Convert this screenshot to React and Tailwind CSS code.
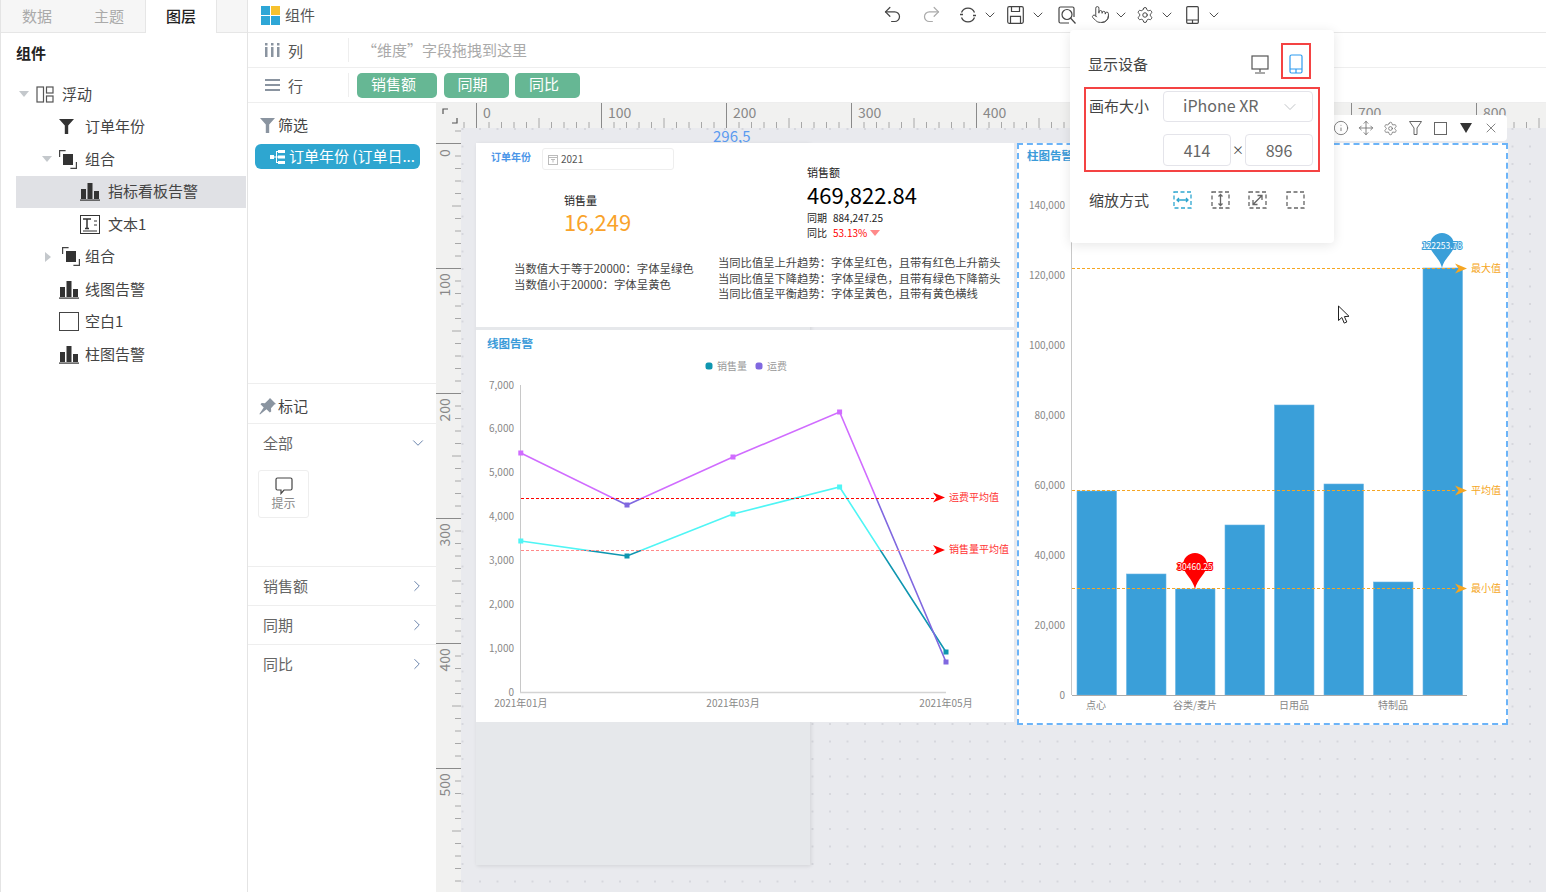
import React from 'react';
import { Undo2, Redo2, Pointer, Settings, ChevronDown, ChevronRight, X, Info, Move } from 'lucide-react';

const BarIcon = ({ className = '' }) => (
  <svg width="20" height="19" viewBox="0 0 20 19" className={className}>
    <rect x="1" y="7" width="5" height="10" fill="#333" />
    <rect x="7.5" y="1" width="5" height="16" fill="#333" />
    <rect x="14" y="9" width="5" height="8" fill="#333" />
    <rect x="0" y="17.5" width="20" height="1.2" fill="#333" />
  </svg>
);

const GroupIcon = () => (
  <svg width="18" height="19" viewBox="0 0 18 19">
    <path d="M0.6 7V0.6h6M17.4 12v6.4h-6" fill="none" stroke="#444" strokeWidth="1.2" />
    <rect x="4" y="4" width="10" height="11" fill="#333" />
  </svg>
);

const FloatIcon = () => (
  <svg width="18" height="17" viewBox="0 0 18 17" fill="none" stroke="#555" strokeWidth="1.2">
    <rect x="1" y="1" width="6.5" height="15" />
    <rect x="10.5" y="1" width="6.5" height="6" />
    <rect x="10.5" y="10" width="6.5" height="6" />
  </svg>
);

const FunnelIcon = ({ color = '#333', width = 15 }) => (
  <svg width={width} height="15" viewBox="0 0 15 15">
    <path d="M0 0h15L9.2 6.5V15H5.8V6.5z" fill={color} />
  </svg>
);

const TextIcon = () => (
  <svg width="20" height="19" viewBox="0 0 20 19" fill="none" stroke="#333">
    <rect x="0.5" y="0.5" width="19" height="18" />
    <path d="M3 4h8M7 4v9M5 13.5h4" strokeWidth="1.5" />
    <path d="M3 16h14M14 6h3M14 10h3" strokeWidth="1" />
  </svg>
);

const Caret = ({ open }) =>
  open ? (
    <svg width="10" height="6" viewBox="0 0 10 6"><path d="M0 0h10L5 6z" fill="#c4c8cc" /></svg>
  ) : (
    <svg width="6" height="10" viewBox="0 0 6 10"><path d="M0 0l6 5-6 5z" fill="#c4c8cc" /></svg>
  );

const TreeRow = ({ pad, icon, label, caret, selected, iconBox = 'w-[26px]' }) => (
  <div className={`flex items-center h-[32.5px] ${pad} ${selected ? 'bg-[#e0e1e5]' : ''}`}>
    <div className="w-[17px] flex items-center">{caret}</div>
    <div className={`${iconBox} flex items-center`}>{icon}</div>
    <span className="text-[15px] leading-[20px] mb-[1px] text-[#444]">{label}</span>
  </div>
);

const Sidebar = () => (
  <div className="w-[248px] shrink-0 h-full border-l border-r border-[#e4e4e4] bg-white">
    <div className="flex h-[33px] bg-[#f6f6f6] border-b border-[#e6e6e6] text-[15px]">
      <div className="w-[72px] flex items-center justify-center text-[#aaa]">数据</div>
      <div className="w-[72px] flex items-center justify-center text-[#aaa]">主题</div>
      <div className="w-[72px] h-[33px] flex items-center justify-center bg-white border-r border-l border-[#e6e6e6] text-[#222] font-medium">图层</div>
    </div>
    <div className="h-[40px] flex items-center pl-[15px] text-[15px] font-bold text-[#222]">组件</div>
    <div className="mt-[5px] ml-[15px] w-[230px]">
      <TreeRow pad="pl-[3px]" caret={<Caret open />} icon={<FloatIcon />} label="浮动" />
      <TreeRow pad="pl-[26px]" icon={<FunnelIcon />} label="订单年份" />
      <TreeRow pad="pl-[26px]" caret={<Caret open />} icon={<GroupIcon />} label="组合" />
      <TreeRow pad="pl-[47px]" iconBox="w-[28px]" icon={<BarIcon />} label="指标看板告警" selected />
      <TreeRow pad="pl-[47px]" iconBox="w-[28px]" icon={<TextIcon />} label="文本1" />
      <TreeRow pad="pl-[29px]" caret={<Caret />} iconBox="w-[23px]" icon={<GroupIcon />} label="组合" />
      <TreeRow pad="pl-[26px]" icon={<BarIcon />} label="线图告警" />
      <TreeRow pad="pl-[26px]" icon={<div className="w-[20px] h-[19px] border border-[#444]" />} label="空白1" />
      <TreeRow pad="pl-[26px]" icon={<BarIcon />} label="柱图告警" />
    </div>
  </div>
);

const Chev = () => <ChevronDown size={16} strokeWidth={1.4} className="text-[#444]" />;

const TopBar = () => (
  <div className="h-[33px] flex items-center pb-[3px] border-b border-[#e8e8e8] bg-white">
    <div className="w-[634px] flex items-center pl-[13px] pt-[2px]">
      <svg width="19" height="19" viewBox="0 0 19 19">
        <rect width="9" height="9" fill="#2ea6d6" />
        <rect x="10" width="9" height="9" fill="#f7c12e" />
        <rect y="10" width="9" height="9" fill="#2ea6d6" />
        <rect x="10" y="10" width="9" height="9" fill="#2ea6d6" />
      </svg>
      <span className="ml-[5px] text-[15px] text-[#555]">组件</span>
    </div>
    <Undo2 size={21} strokeWidth={1.4} className="text-[#444]" />
    <Redo2 size={21} strokeWidth={1.4} className="text-[#aaa] ml-[18px]" />
    <svg width="18" height="18" viewBox="0 0 18 18" fill="none" stroke="#444" strokeWidth="1.3" className="ml-[17px]">
      <path d="M2.5 6.5a7 7 0 0 1 13 0M15.5 11.5a7 7 0 0 1-13 0" />
      <path d="M1 8.5h3M14 9.5h3" />
    </svg>
    <div className="ml-[5px]"><Chev /></div>
    <svg width="17" height="18" viewBox="0 0 17 18" fill="none" stroke="#444" strokeWidth="1.2" className="ml-[9px]">
      <rect x="0.7" y="0.7" width="15.6" height="16.6" rx="1.5" />
      <path d="M4.5 0.7v4.8h8V0.7M3.5 17.3v-7h10v7" />
    </svg>
    <div className="ml-[6px]"><Chev /></div>
    <svg width="18" height="18" viewBox="0 0 18 18" fill="none" stroke="#444" strokeWidth="1.2" className="ml-[12px]">
      <path d="M11 17H2.5A1.5 1.5 0 0 1 1 15.5v-13A1.5 1.5 0 0 1 2.5 1h12A1.5 1.5 0 0 1 16 2.5V11" />
      <circle cx="9" cy="8.5" r="5" />
      <path d="M12.5 12l5 5.5" />
    </svg>
    <Pointer size={19} strokeWidth={1.2} className="text-[#444] ml-[15px]" />
    <div className="ml-[3px]"><Chev /></div>
    <Settings size={18} strokeWidth={1.3} className="text-[#444] ml-[7px]" />
    <div className="ml-[5px]"><Chev /></div>
    <svg width="13" height="18" viewBox="0 0 13 18" fill="none" stroke="#444" strokeWidth="1.2" className="ml-[11px]">
      <rect x="0.7" y="0.7" width="11.6" height="16.6" rx="1" />
      <path d="M0.7 14h11.6M6.5 14v3.3" />
    </svg>
    <div className="ml-[7px]"><Chev /></div>
  </div>
);

const Chip = ({ w, children }) => (
  <div className={`${w} h-[25px] flex items-center pl-[14px] pb-[2px] rounded-[5px] bg-[#66b794] text-white text-[15px]`}>{children}</div>
);

const ShelfRows = () => (
  <>
    <div className="h-[35px] flex items-center border-b border-[#eeeeee] bg-white">
      <div className="w-[101px] h-[24px] flex items-center pl-[17px] border-r border-[#eeeeee]">
        <svg width="15" height="14" viewBox="0 0 15 14">
          <rect x="0" y="0" width="2.5" height="2.5" fill="#8a94a0" />
          <rect x="6" y="0" width="2.5" height="2.5" fill="#8a94a0" />
          <rect x="12" y="0" width="2.5" height="2.5" fill="#8a94a0" />
          <rect x="0" y="4" width="2.5" height="10" fill="#8a94a0" />
          <rect x="6" y="4" width="2.5" height="10" fill="#8a94a0" />
          <rect x="12" y="4" width="2.5" height="10" fill="#8a94a0" />
        </svg>
        <span className="ml-[8px] mt-[2px] text-[15px] text-[#555]">列</span>
      </div>
      <span className="ml-[13px] text-[15px] text-[#aaa]">“维度”字段拖拽到这里</span>
    </div>
    <div className="h-[35px] flex items-center border-b border-[#eeeeee] bg-white">
      <div className="w-[101px] h-[24px] flex items-center pl-[17px] border-r border-[#eeeeee]">
        <svg width="15" height="14" viewBox="0 0 15 14" fill="#8a94a0">
          <rect x="0" y="1" width="15" height="2" />
          <rect x="0" y="6" width="15" height="2" />
          <rect x="0" y="11" width="15" height="2" />
        </svg>
        <span className="ml-[8px] mt-[2px] text-[15px] text-[#555]">行</span>
      </div>
      <div className="ml-[8px] flex gap-[6.5px]">
        <Chip w="w-[80px]">销售额</Chip>
        <Chip w="w-[65px]">同期</Chip>
        <Chip w="w-[65px]">同比</Chip>
      </div>
    </div>
  </>
);

const PropRow = ({ label }) => (
  <div className="h-[39px] flex items-center justify-between pl-[15px] pr-[10px] border-t border-[#eeeeee] text-[15px] text-[#666]">
    <span>{label}</span>
    <ChevronRight size={18} strokeWidth={1.1} className="text-[#4a6a9a]" />
  </div>
);

const MarkPanel = () => (
  <div className="w-[188px] shrink-0 h-full bg-white text-[15px]">
    <div className="h-[280px]">
      <div className="h-[41px] flex items-center pl-[12px] pt-[3px]">
        <FunnelIcon color="#8a94a0" />
        <span className="ml-[3px] text-[#444]">筛选</span>
      </div>
      <div className="ml-[7px] w-[165px] h-[25px] flex items-center pl-[15px] rounded-[6px] bg-[#2ea6d0] text-white whitespace-nowrap">
        <svg width="15" height="14" viewBox="0 0 15 14" fill="#fff" className="shrink-0">
          <rect x="0" y="5" width="4" height="4" />
          <rect x="8" y="0" width="7" height="3" />
          <rect x="8" y="5.5" width="7" height="3" />
          <rect x="8" y="11" width="7" height="3" />
          <path d="M4 6.5h2V1h2v1H7v4.5h1v1H7V12h1v1H6V7.5H4z" />
        </svg>
        <span className="ml-[4px]">订单年份 (订单日...</span>
      </div>
    </div>
    <div className="h-[41px] flex items-center pl-[11px] pt-[6px] border-t border-b border-[#eeeeee]">
      <svg width="17" height="17" viewBox="0 0 17 17" fill="#8a94a0">
        <path d="M11 0l6 6-1.6.6-3.4 3.6.2 3.2-1.4 1.2-3.3-3.4L1 16.5l-.6-.6 4.3-6.3-3.2-3.3L2.7 5l3.2.2L9.5 1.7z" />
      </svg>
      <span className="ml-[2px] text-[#444]">标记</span>
    </div>
    <div className="h-[142px]">
      <div className="h-[38px] flex items-center justify-between pl-[15px] pr-[9px] text-[#666]">
        <span>全部</span>
        <ChevronDown size={18} strokeWidth={1.1} className="text-[#4a6a9a]" />
      </div>
      <div className="ml-[10px] mt-[8px] w-[51px] h-[48px] flex flex-col items-center justify-center border border-[#eeeeee] rounded-[3px]">
        <svg width="18" height="18" viewBox="0 0 18 18" fill="none" stroke="#444" strokeWidth="1.2">
          <path d="M2.5 1h13A1.5 1.5 0 0 1 17 2.5v9a1.5 1.5 0 0 1-1.5 1.5H9l-3 3.5V13H2.5A1.5 1.5 0 0 1 1 11.5v-9A1.5 1.5 0 0 1 2.5 1z" />
        </svg>
        <span className="text-[12px] leading-[16px] text-[#888]">提示</span>
      </div>
    </div>
    <PropRow label="销售额" />
    <PropRow label="同期" />
    <PropRow label="同比" />
  </div>
);

const range = (a, b) => Array.from({ length: b - a + 1 }, (_, i) => a + i);

const tickClass = (i) => (i % 10 === 0 ? '#8a8a8a' : '#a8a8a8');

const HRuler = () => (
  <svg width="1084" height="25" viewBox="462 103 1084 25" className="block">
    {range(-1, 86).map((i) => {
      const x = 476.5 + i * 12.5;
      const top = i % 10 === 0 ? 103 : i % 5 === 0 ? 118 : 122;
      return <line key={i} x1={x} x2={x} y1={top} y2="128" stroke={tickClass(i)} strokeWidth="1" />;
    })}
    {range(0, 8).map((n) => (
      <text key={n} x={483 + n * 125} y="118" fontSize="14" fill="#888">{n * 100}</text>
    ))}
  </svg>
);

const VRuler = () => (
  <svg width="25" height="764" viewBox="436 128 25 764" className="block shrink-0">
    {range(-1, 60).map((i) => {
      const y = 143.5 + i * 12.5;
      const left = i % 10 === 0 ? 436 : i % 5 === 0 ? 452 : 455;
      return <line key={i} x1={left} x2="461" y1={y} y2={y} stroke={tickClass(i)} strokeWidth="1" />;
    })}
    {range(0, 5).map((n) => (
      <text key={n} transform={`translate(450 ${(n === 0 ? 157 : 171.5) + n * 125}) rotate(-90)`} fontSize="14" fill="#888">{n * 100}</text>
    ))}
  </svg>
);

const KpiCard = () => (
  <div className="absolute left-[15px] top-[15px] w-[538px] h-[184px] bg-white">
    <span className="absolute left-[15px] top-[7px] text-[10px] leading-[14px] font-bold text-[#4c96e8]">订单年份</span>
    <div className="absolute left-[66px] top-[5px] w-[132px] h-[22px] flex items-center pl-[5px] border border-[#eeeeee] rounded-[3px]">
      <svg width="10" height="11" viewBox="0 0 10 11" fill="none" stroke="#bbb">
        <rect x="0.5" y="1.5" width="9" height="9" />
        <path d="M0.5 3.5h9M3 5.5h4M5 5.5v3" />
      </svg>
      <span className="ml-[3px] text-[10px] text-[#555] mb-[2px]">2021</span>
    </div>
    <div className="absolute left-[88px] top-[50px]">
      <div className="text-[11px] leading-[14px] text-[#222]">销售量</div>
      <div className="text-[22px] leading-[32px] text-[#f9a32b] mt-[-2px]">16,249</div>
    </div>
    <div className="absolute left-[331px] top-[22px]">
      <div className="text-[11px] leading-[14px] text-[#222]">销售额</div>
      <div className="text-[22px] leading-[32px] text-black mt-[-1px]">469,822.84</div>
      <div className="flex text-[10px] leading-[15px] text-[#222]">
        <span className="w-[26px]">同期</span>
        <span>884,247.25</span>
      </div>
      <div className="flex items-center text-[10px] leading-[15px] text-[#222]">
        <span className="w-[26px]">同比</span>
        <span className="text-[#f00]">53.13%</span>
        <svg width="10" height="6" viewBox="0 0 10 6" className="ml-[3px]"><path d="M0 0h10L5 6z" fill="#ff8a8a" /></svg>
      </div>
    </div>
    <div className="absolute left-[38px] top-[117px] text-[11.4px] leading-[16px] text-[#444] whitespace-nowrap">
      <div>当数值大于等于20000：字体呈绿色</div>
      <div>当数值小于20000：字体呈黄色</div>
    </div>
    <div className="absolute left-[242px] top-[112px] text-[11.3px] leading-[15.7px] text-[#444] whitespace-nowrap">
      <div>当同比值呈上升趋势：字体呈红色，且带有红色上升箭头</div>
      <div>当同比值呈下降趋势：字体呈绿色，且带有绿色下降箭头</div>
      <div>当同比值呈平衡趋势：字体呈黄色，且带有黄色横线</div>
    </div>
  </div>
);

const arrow = (tip, y) => `M${tip} ${y}L${tip - 12} ${y - 5}L${tip - 8.5} ${y}L${tip - 12} ${y + 5}Z`;

const LINE_X = [520.8, 627, 733, 839.6, 946];
const FREIGHT_Y = [453, 505, 457, 412, 662];
const SALES_Y = [541, 556, 514, 487, 652];
const pts = (ys) => ys.map((y, i) => `${LINE_X[i]},${y}`).join(' ');

const LineChart = () => (
  <div className="absolute left-[15px] top-[202px] w-[538px] h-[392px] bg-white">
    <svg width="538" height="392" viewBox="476 330 538 392" className="block">
      <defs>
        <clipPath id="above-freight"><rect x="476" y="330" width="538" height="168" /></clipPath>
        <clipPath id="below-freight"><rect x="476" y="498" width="538" height="224" /></clipPath>
        <clipPath id="above-sales"><rect x="476" y="330" width="538" height="220" /></clipPath>
        <clipPath id="below-sales"><rect x="476" y="550" width="538" height="172" /></clipPath>
      </defs>
      <text x="487" y="348" fontSize="11.5" fontWeight="700" fill="#3b9bd9">线图告警</text>
      <rect x="705.5" y="362.5" width="7" height="7" rx="2.5" fill="#0f96b0" />
      <text x="717" y="369.5" fontSize="10" fill="#999">销售量</text>
      <rect x="755.5" y="362.5" width="7" height="7" rx="2.5" fill="#8068e0" />
      <text x="767" y="369.5" fontSize="10" fill="#999">运费</text>
      {['7,000', '6,000', '5,000', '4,000', '3,000', '2,000', '1,000', '0'].map((t, i) => (
        <text key={t} x="514" y={388.5 + i * 43.9} fontSize="10" fill="#888" textAnchor="end">{t}</text>
      ))}
      <line x1="520.5" x2="520.5" y1="385" y2="692" stroke="#c8c8c8" />
      <line x1="520" x2="946" y1="692.5" y2="692.5" stroke="#d4d4d4" strokeWidth="1.5" />
      {[['2021年01月', 520.8], ['2021年03月', 733], ['2021年05月', 946]].map(([t, x]) => (
        <text key={t} x={x} y="707" fontSize="10" fill="#888" textAnchor="middle">{t}</text>
      ))}
      <polyline points={pts(SALES_Y)} fill="none" stroke="#4ff5f5" strokeWidth="1.6" clipPath="url(#above-sales)" />
      <polyline points={pts(SALES_Y)} fill="none" stroke="#0f96b0" strokeWidth="1.6" clipPath="url(#below-sales)" />
      <polyline points={pts(FREIGHT_Y)} fill="none" stroke="#d06cff" strokeWidth="1.6" clipPath="url(#above-freight)" />
      <polyline points={pts(FREIGHT_Y)} fill="none" stroke="#8068e0" strokeWidth="1.6" clipPath="url(#below-freight)" />
      {LINE_X.map((x, i) => (
        <g key={x}>
          <rect x={x - 2.5} y={FREIGHT_Y[i] - 2.5} width="5" height="5" fill={FREIGHT_Y[i] > 498 ? '#8068e0' : '#d06cff'} />
          <rect x={x - 2.5} y={SALES_Y[i] - 2.5} width="5" height="5" fill={SALES_Y[i] > 550 ? '#0f96b0' : '#4ff5f5'} />
        </g>
      ))}
      <line x1="521" x2="934" y1="498.5" y2="498.5" stroke="#f00" strokeDasharray="3 2" />
      <line x1="521" x2="934" y1="550.5" y2="550.5" stroke="#ff8a8a" strokeDasharray="3 2" />
      <path d={arrow(945, 497.5)} fill="#f00" />
      <path d={arrow(945, 550)} fill="#f00" />
      <text x="949" y="500.5" fontSize="10" fill="#f33">运费平均值</text>
      <text x="949" y="553" fontSize="10" fill="#f33">销售量平均值</text>
    </svg>
  </div>
);

const BARS = [[1077, 491], [1126.5, 574], [1175.5, 589], [1225, 525], [1274.5, 405], [1324, 484], [1373.5, 582], [1423, 268]];

const pin = (cx, top, tip, r) =>
  `M${cx} ${tip}C${cx - 2} ${tip - 10} ${cx - r} ${top + r + 8} ${cx - r} ${top + r}A${r} ${r} 0 1 1 ${cx + r} ${top + r}C${cx + r} ${top + r + 8} ${cx + 2} ${tip - 10} ${cx} ${tip}Z`;

const BarChart = () => (
  <div className="absolute left-[556px] top-[15px] w-[491px] h-[582px] bg-white border-2 border-dashed border-[#6cb4f8]">
    <svg width="487" height="578" viewBox="1019 145 487 578" className="block">
      <text x="1027" y="160" fontSize="11.5" fontWeight="700" fill="#3b9bd9">柱图告警</text>
      {['140,000', '120,000', '100,000', '80,000', '60,000', '40,000', '20,000', '0'].map((t, i) => (
        <text key={t} x="1065" y={209 + i * 70} fontSize="10" fill="#888" textAnchor="end">{t}</text>
      ))}
      <line x1="1071.5" x2="1071.5" y1="204" y2="695" stroke="#c8c8c8" />
      {BARS.map(([x, top]) => (
        <rect key={x} x={x} y={top} width="39.5" height={695 - top} fill="#3a9fd9" stroke="#6ab4e4" strokeWidth="0.6" />
      ))}
      <line x1="1072" x2="1467" y1="695.5" y2="695.5" stroke="#aaa" />
      {[['点心', 1096], ['谷类/麦片', 1195], ['日用品', 1294], ['特制品', 1393]].map(([t, x]) => (
        <text key={t} x={x} y="709" fontSize="10" fill="#888" textAnchor="middle">{t}</text>
      ))}
      {[[268.5, '最大值'], [490.5, '平均值'], [588.5, '最小值']].map(([y, t]) => (
        <g key={t}>
          <line x1="1072" x2="1456" y1={y} y2={y} stroke="#f5a623" strokeDasharray="3 2" />
          <path d={arrow(1467, y)} fill="#f5a623" />
          <text x="1471" y={y + 3} fontSize="10" fill="#f5a623">{t}</text>
        </g>
      ))}
      <path d={pin(1195, 553, 589, 12)} fill="#f00" />
      <text x="1195" y="570" fontSize="8.5" fill="#fff" stroke="#f00" strokeWidth="2" paintOrder="stroke" textAnchor="middle">30460.25</text>
      <path d={pin(1442, 233, 268, 12)} fill="#3a9fd9" />
      <text x="1442" y="249" fontSize="8.5" fill="#fff" stroke="#3a9fd9" strokeWidth="2" paintOrder="stroke" textAnchor="middle">122253.78</text>
      <path d="M1338.5 306v14.5l3.4-3 2.3 5.6 2.6-1.1-2.4-5.4 4.6-.3z" fill="#fff" stroke="#222" strokeWidth="1" />
    </svg>
  </div>
);

const ToolCell = ({ children }) => <div className="w-[25px] flex items-center justify-center">{children}</div>;

const WidgetToolbar = () => (
  <div className="absolute left-[867px] top-[-13px] w-[179px] h-[26px] flex items-center bg-white rounded-[4px] text-[#666]">
    <ToolCell><Info size={16} strokeWidth={1.2} /></ToolCell>
    <ToolCell><Move size={16} strokeWidth={1.2} /></ToolCell>
    <ToolCell><Settings size={15} strokeWidth={1.2} /></ToolCell>
    <ToolCell>
      <svg width="13" height="14" viewBox="0 0 13 14" fill="none" stroke="#666"><path d="M0.5 0.5h12L8 7v6.5H5V7z" /></svg>
    </ToolCell>
    <ToolCell><div className="w-[13px] h-[13px] border border-[#666]" /></ToolCell>
    <ToolCell>
      <svg width="12" height="10" viewBox="0 0 12 10"><path d="M0 0h12L6 10z" fill="#333" /></svg>
    </ToolCell>
    <ToolCell><X size={16} strokeWidth={1.2} /></ToolCell>
  </div>
);

const Canvas = () => (
  <div className="flex-1 min-w-0 h-full flex flex-col bg-[#f1f1f0]">
    <div className="h-[25px] flex">
      <div className="w-[25px] h-[25px] flex items-center justify-center ml-[1px]">
        <svg width="16" height="16" viewBox="0 0 16 16" fill="none" stroke="#555" strokeWidth="1.2">
          <path d="M1 6V1h5M15 10v5h-5" />
        </svg>
      </div>
      <HRuler />
    </div>
    <div className="flex-1 flex min-h-0">
      <VRuler />
      <div className="relative flex-1 bg-[#e9eaee] bg-[radial-gradient(circle,#d6d7dd_1.3px,transparent_1.5px)] bg-[length:17.5px_17.5px] bg-[position:-7.25px_-7.75px]">
        <span className="absolute left-[252px] top-[-1px] text-[15px] leading-[18px] text-[#5b9bf0]">296,5</span>
        <div className="absolute left-[15px] top-[15px] w-[334px] h-[722px] bg-[#e6e8eb] shadow-[1px_1px_4px_rgba(0,0,0,0.1)]" />
        <KpiCard />
        <LineChart />
        <BarChart />
        <WidgetToolbar />
      </div>
    </div>
  </div>
);

const ScaleIcon = ({ active, children }) => {
  const stroke = active ? '#2ea6d0' : '#666';
  return (
    <svg width="19" height="18" viewBox="0 0 19 18" fill="none" stroke={stroke} strokeWidth="1.3">
      <rect x="1" y="1" width="17" height="16" strokeDasharray="4 2.5" />
      {children}
    </svg>
  );
};

const Popover = () => (
  <div className="absolute left-[1070px] top-[30px] w-[264px] h-[213px] bg-white rounded-[4px] shadow-[0_2px_12px_rgba(0,0,0,0.1)] text-[15px] text-[#444] pt-[13px]">
    <div className="h-[36px] flex items-center pl-[18px]">
      <span className="w-[163px] pt-[6px]">显示设备</span>
      <svg width="18" height="19" viewBox="0 0 18 19" fill="none" stroke="#555" strokeWidth="1.2" className="mt-[6px]">
        <rect x="1" y="1" width="16" height="13" />
        <path d="M9 14v3M4 18h10" />
      </svg>
      <div className="ml-[12px] w-[30px] h-[36px] flex items-center justify-center pt-[6px] border-2 border-[#f44343]">
        <svg width="14" height="20" viewBox="0 0 14 20" fill="none" stroke="#2f9cf0" strokeWidth="1.2">
          <rect x="1" y="1" width="12" height="18" rx="1.5" />
          <path d="M1 15h12M7 15v4" />
        </svg>
      </div>
    </div>
    <div className="mt-[8px] ml-[14px] w-[236px] h-[85px] border-2 border-[#f44343] pt-[2px] pl-[3px]">
      <div className="flex items-center">
        <span className="w-[74px]">画布大小</span>
        <div className="w-[150px] h-[31px] flex items-center justify-between pl-[19px] pr-[12px] border border-[#e4e4ea] rounded-[4px] text-[#666] text-[16px]">
          <span className="mb-[4px]">iPhone XR</span>
          <ChevronDown size={20} strokeWidth={1} className="text-[#b4b8bc]" />
        </div>
      </div>
      <div className="mt-[12px] ml-[74px] flex items-center">
        <div className="w-[68px] h-[32px] flex items-center justify-center border border-[#e4e4ea] rounded-[4px] text-[#666] text-[16px]">414</div>
        <span className="w-[14px] text-center text-[12px]">×</span>
        <div className="w-[68px] h-[32px] flex items-center justify-center border border-[#e4e4ea] rounded-[4px] text-[#666] text-[16px]">896</div>
      </div>
    </div>
    <div className="mt-[18px] h-[20px] flex items-center pl-[19px]">
      <span className="w-[84px]">缩放方式</span>
      <div className="flex gap-[18.5px]">
        <ScaleIcon active><path d="M4 9h11M6 7l-2 2 2 2M13 7l2 2-2 2" /></ScaleIcon>
        <ScaleIcon><path d="M9.5 3.5v11M7.5 5.5l2-2 2 2M7.5 12.5l2 2 2-2" /></ScaleIcon>
        <ScaleIcon><path d="M5 13.5l9-9M9.5 4.5H14V9M5 9v4.5h4.5" /></ScaleIcon>
        <ScaleIcon />
      </div>
    </div>
  </div>
);

export default function App() {
  return (
    <div className="relative w-[1546px] h-[892px] overflow-hidden flex bg-white font-['Noto_Sans_CJK_SC','Microsoft_YaHei',sans-serif]">
      <Sidebar />
      <div className="flex-1 min-w-0 h-full flex flex-col">
        <TopBar />
        <ShelfRows />
        <div className="flex-1 min-h-0 flex">
          <MarkPanel />
          <Canvas />
        </div>
      </div>
      <Popover />
    </div>
  );
}
